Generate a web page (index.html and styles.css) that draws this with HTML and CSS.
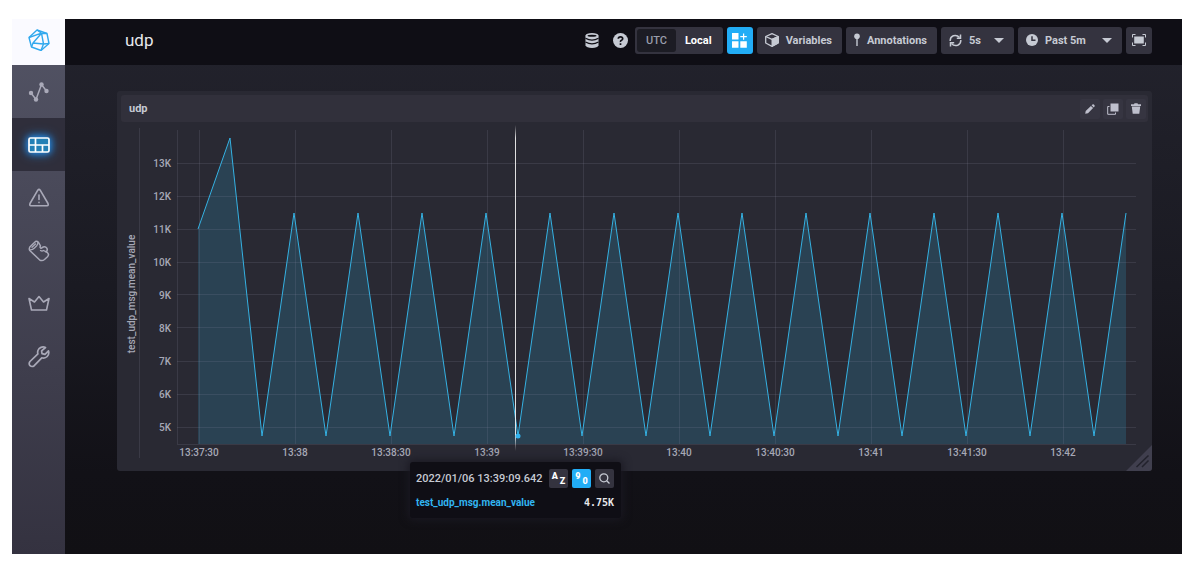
FILE: index.html
```html
<!DOCTYPE html>
<html lang="en">
<head>
    <meta charset="UTF-8">
    <meta name="viewport" content="width=device-width, initial-scale=1.0">
    <title>udp</title>
    <link rel="stylesheet" href="styles.css">
</head>
<body>
    <div class="app">
        <nav class="sidebar">
            <a class="logo" href="#" aria-label="Home">
                <svg width="22" height="22" viewBox="0 0 22 22" fill="none" stroke="#31a9ee" stroke-width="1.4" stroke-linejoin="round">
                    <path d="M9 1L19 4.500L21 14.500L13 21.500L3.500 18L1 8.500Z"/>
                    <path d="M9 1L13.500 4.200L19 4.500M13.500 4.200L1 8.500M13.500 4.200L15.500 15L5 14L13.500 4.200M5 14L3.500 18M15.500 15L21 14.500M15.500 15L13 21.500"/>
                </svg>
            </a>
            <a class="nav-item" href="#" aria-label="Data Explorer">
                <svg width="22" height="22" viewBox="0 0 22 22" fill="currentColor">
                    <path d="M3 12L8 18.500L13.500 3.500L18.500 10" fill="none" stroke="currentColor" stroke-width="1.5"/>
                    <circle cx="3" cy="12" r="2.200"/><circle cx="8" cy="18.500" r="2.200"/><circle cx="13.500" cy="3.500" r="2.200"/><circle cx="18.500" cy="10" r="2.200"/>
                </svg>
            </a>
            <a class="nav-item active" href="#" aria-label="Dashboards">
                <svg width="22" height="22" viewBox="0 0 22 22" fill="none" stroke="currentColor" stroke-width="1.7">
                    <rect x="1" y="4" width="20" height="14" rx="1.500" fill="#2380b5"/>
                    <path d="M1 11H21M7.500 4V18M14.500 11V18"/>
                </svg>
            </a>
            <a class="nav-item" href="#" aria-label="Alerts">
                <svg width="22" height="22" viewBox="0 0 22 22" fill="none" stroke="currentColor" stroke-width="1.6" stroke-linejoin="round" stroke-linecap="round">
                    <path d="M9.800 3.200Q11 1.500 12.200 3.200L20 16.500Q20.800 18.500 19 18.700H3Q1.200 18.500 2 16.500Z"/>
                    <path d="M11 8V12.500M11 15.200V15.600"/>
                </svg>
            </a>
            <a class="nav-item" href="#" aria-label="Load Data">
                <svg width="22" height="22" viewBox="0 0 22 22" fill="none" stroke="currentColor" stroke-width="1.5" stroke-linejoin="round" stroke-linecap="round">
                    <path d="M7.500 1.500L1.800 7Q0.800 9 1.800 10.500L11.500 19.800Q14 21.500 16.500 19.500L19.500 16.800Q21.500 14.500 19.500 12.700L18 11.800Q20 10.500 18.800 8.200Q17.500 6 15.200 7L13 8.300Q11.500 7.500 12.500 5.800L10.300 2.200Q9 0.800 7.500 1.500Z"/>
                    <path d="M2 9.800Q4.500 10 6.500 8L8.700 5.800Q10.300 4 9.800 2.200M4 7.200L7.500 4" stroke-width="1.3"/>
                    <path d="M12.500 10.500Q14 11.500 15.500 10.500L17.800 11.700" stroke-width="1.3"/>
                </svg>
            </a>
            <a class="nav-item" href="#" aria-label="Organization">
                <svg width="22" height="22" viewBox="0 0 22 22" fill="none" stroke="currentColor" stroke-width="1.6" stroke-linejoin="round">
                    <path d="M1 5.500L6.500 9L11 3.500L15.500 9L21 5.500L18.500 17H3.500Z"/>
                </svg>
            </a>
            <a class="nav-item" href="#" aria-label="Settings">
                <svg width="22" height="22" viewBox="0 0 22 22" fill="none" stroke="currentColor" stroke-width="1.7" stroke-linejoin="round">
                    <path d="M17.500 1.500Q14 0 11 2.700Q9 4.900 9.900 7.900L2 15.500Q0.400 17.700 2 19.700Q4 21.300 6.200 19.700L13.800 11.800Q17 12.700 19.200 10.500Q21.500 8.200 20.500 4.900L17 8.300L14 7.700L13.600 4.900Z"/>
                </svg>
            </a>
        </nav>

        <div class="page">
            <header class="topbar">
                <h1>udp</h1>
                <div class="controls">
                    <svg class="db-icon" width="14" height="15" viewBox="0 0 14 15" fill="currentColor">
                        <path d="M0.500 2.500V12.500Q1.500 14.900 7 14.900T13.500 12.500V2.500Z"/>
                        <ellipse cx="7" cy="2.700" rx="6.500" ry="2.600"/>
                        <ellipse cx="7" cy="2.700" rx="4.500" ry="1" fill="#0f0e15"/>
                        <path d="M0.500 5.200Q7 9 13.500 5.200M0.500 9Q7 12.800 13.500 9" fill="none" stroke="#0f0e15" stroke-width="1.2"/>
                    </svg>
                    <svg class="help-icon" width="15" height="15" viewBox="0 0 15 15">
                        <circle cx="7.500" cy="7.500" r="7.500" fill="currentColor"/>
                        <path d="M5.300 5.800Q5.400 3.800 7.500 3.800T9.700 5.700Q9.700 6.700 8.500 7.300T7.500 9M7.500 10.200V12" fill="none" stroke="#0f0e15" stroke-width="1.700"/>
                    </svg>
                    <div class="timezone">
                        <button type="button" aria-pressed="false">UTC</button>
                        <button type="button" class="selected" aria-pressed="true">Local</button>
                    </div>
                    <button type="button" class="btn square primary" aria-label="Add cell">
                        <svg width="15" height="15" viewBox="0 0 15 15" fill="currentColor">
                            <path d="M0 0H6.500V6.500H0ZM0 8.300H6.500V14.800H0ZM8.300 8.300H14.800V14.800H8.300ZM11 0.500H12.200V3H14.800V4.200H12.200V6.800H11V4.200H8.300V3H11Z"/>
                        </svg>
                    </button>
                    <button type="button" class="btn">
                        <svg width="14" height="14" viewBox="0 0 14 14" fill="none" stroke="currentColor" stroke-linejoin="round">
                            <path d="M7 0.700L13.300 3.500V10L7 13.300L0.700 10V3.500Z" stroke-width="1.300"/>
                            <path d="M0.700 3.500L7 6.300L13.300 3.500" stroke-width="1.300"/>
                            <path d="M7 6.300L13.300 3.500V10L7 13.300Z" fill="currentColor"/>
                        </svg>
                        Variables
                    </button>
                    <button type="button" class="btn">
                        <svg width="6" height="14" viewBox="0 0 6 14" fill="currentColor">
                            <circle cx="3" cy="3.300" r="2.800"/><path d="M2.300 5H3.700V13H2.300Z"/>
                        </svg>
                        Annotations
                    </button>
                    <div class="btn picker">
                        <svg width="13" height="13" viewBox="0 0 13 13" fill="none" stroke="currentColor" stroke-width="1.500">
                            <path d="M1.200 7Q1 3.200 4.300 1.800Q8 0.600 10.500 3.600M11.800 6Q12 9.800 8.700 11.200Q5 12.400 2.500 9.400"/>
                            <path d="M11.500 0.500V4.200H7.800M1.500 12.500V8.800H5.200"/>
                        </svg>
                        <select class="refresh-select" aria-label="Refresh interval">
                            <option>5s</option>
                            <option>10s</option>
                            <option>30s</option>
                        </select>
                        <span class="caret"></span>
                    </div>
                    <div class="btn picker">
                        <svg width="12" height="12" viewBox="0 0 12 12">
                            <circle cx="6" cy="6" r="6" fill="currentColor"/>
                            <path d="M6 2.200V6.200H9.500" fill="none" stroke="#34333f" stroke-width="1.500"/>
                        </svg>
                        <select class="range-select" aria-label="Time range">
                            <option>Past 5m</option>
                            <option>Past 15m</option>
                            <option>Past 1h</option>
                        </select>
                        <span class="caret"></span>
                    </div>
                    <button type="button" class="btn square" aria-label="Full screen">
                        <svg width="14" height="12" viewBox="0 0 14 12" fill="currentColor">
                            <path d="M2.200 2.500H11.800V9.500H2.200Z"/>
                            <path d="M0.500 3.500V0.500H3.500M10.500 0.500H13.500V3.500M13.500 8.500V11.500H10.500M3.500 11.500H0.500V8.500" fill="none" stroke="currentColor"/>
                        </svg>
                    </button>
                </div>
            </header>

            <main class="content">
                <section class="cell">
                    <div class="cell-header">
                        <h2>udp</h2>
                        <div class="cell-actions">
                            <button type="button" aria-label="Edit">
                                <svg width="10" height="10" viewBox="0 0 10 10" fill="currentColor"><path d="M0.200 9.800L0.700 7L5.900 1.900L8.100 4.100L3 9.300ZM6.600 1.200L7.500 0.400Q8.200 0 8.900 0.600L9.500 1.200Q10 1.900 9.500 2.600L8.800 3.400Z"/></svg>
                            </button>
                            <button type="button" aria-label="Clone">
                                <svg width="12" height="12" viewBox="0 0 12 12" fill="currentColor"><path d="M3.500 0.500H11.500V8.500H3.500Z"/><path d="M2.500 3.500H0.700V11.300H8.500V9.500" fill="none" stroke="currentColor"/></svg>
                            </button>
                            <button type="button" aria-label="Delete">
                                <svg width="10" height="11" viewBox="0 0 10 11" fill="currentColor"><path d="M0 1.200H3L3.500 0.200H6.500L7 1.200H10V3H0ZM0.800 3.500H9.200L8.300 10.800H1.700Z"/></svg>
                            </button>
                        </div>
                    </div>

                    <svg class="chart" viewBox="0 0 1035 349" role="img" aria-label="test_udp_msg.mean_value over time">
                        <defs>
                            <linearGradient id="cursorFade" x1="0" y1="0" x2="0" y2="1">
                                <stop offset="0" stop-color="#fff" stop-opacity="0"/>
                                <stop offset="0.04" stop-color="#fff"/>
                                <stop offset="0.95" stop-color="#fff"/>
                                <stop offset="1" stop-color="#fff" stop-opacity="0"/>
                            </linearGradient>
                        </defs>

                        <path class="area" d="M81 322V107L113 16L145 314L177 91L209 314L241 91L273 314L305 91L337 314L369 91L401 314L433 91L465 314L497 91L529 314L561 91L593 314L625 91L657 314L689 91L721 314L753 91L785 314L817 91L849 314L881 91L913 314L945 91L977 314L1009 91V322Z"/>
                        <path class="grid" d="M60 41.500H1019M60 74.500H1019M60 107.500H1019M60 140.500H1019M60 172.500H1019M60 205.500H1019M60 239.500H1019M60 272.500H1019M60 305.500H1019"/>
                        <path class="grid" d="M82.500 8V322M178.500 8V322M274.500 8V322M370.500 8V322M466.500 8V322M562.500 8V322M658.500 8V322M754.500 8V322M850.500 8V322M946.500 8V322"/>
                        <path class="axis" d="M22.500 6V336M60.500 8V322M60 322.500H1019"/>
                        <path class="line" d="M81 107L113 16L145 314L177 91L209 314L241 91L273 314L305 91L337 314L369 91L401 314L433 91L465 314L497 91L529 314L561 91L593 314L625 91L657 314L689 91L721 314L753 91L785 314L817 91L849 314L881 91L913 314L945 91L977 314L1009 91"/>
                        <rect x="398" y="3" width="1" height="326" fill="url(#cursorFade)" opacity="0.85"/>
                        <circle cx="401" cy="314" r="2.500" fill="#32b5f1"/>

                        <g class="tick y-tick">
                            <text x="54" y="45">13K</text>
                            <text x="54" y="78">12K</text>
                            <text x="54" y="111">11K</text>
                            <text x="54" y="144">10K</text>
                            <text x="54" y="177">9K</text>
                            <text x="54" y="210">8K</text>
                            <text x="54" y="243">7K</text>
                            <text x="54" y="276">6K</text>
                            <text x="54" y="309">5K</text>
                        </g>
                        <g class="tick x-tick">
                            <text x="82" y="334">13:37:30</text>
                            <text x="178" y="334">13:38</text>
                            <text x="274" y="334">13:38:30</text>
                            <text x="370" y="334">13:39</text>
                            <text x="466" y="334">13:39:30</text>
                            <text x="562" y="334">13:40</text>
                            <text x="658" y="334">13:40:30</text>
                            <text x="754" y="334">13:41</text>
                            <text x="850" y="334">13:41:30</text>
                            <text x="946" y="334">13:42</text>
                        </g>
                        <text class="tick x-tick" transform="translate(18 172) rotate(-90)">test_udp_msg.mean_value</text>
                    </svg>

                    <svg class="resizer" width="26" height="26" viewBox="0 0 26 26">
                        <path d="M26 0V23Q26 26 23 26H0Z" fill="#403f4e"/>
                        <path d="M10.500 22L22.500 10.500M16 22L22.500 15.500" stroke="#22222c" stroke-width="1.500"/>
                    </svg>

                    <div class="tooltip">
                        <div class="tooltip-row">
                            <span class="tooltip-time">2022/01/06 13:39:09.642</span>
                            <div class="tooltip-actions">
                                <button type="button" aria-label="Sort by name"><span>A</span><span class="low">Z</span></button>
                                <button type="button" class="primary" aria-label="Sort by value"><span>9</span><span class="low">0</span></button>
                                <button type="button" aria-label="Filter">
                                    <svg width="11" height="11" viewBox="0 0 11 11" fill="none" stroke="currentColor" stroke-width="1.300"><circle cx="4.800" cy="4.800" r="4"/><path d="M7.700 7.700L10.500 10.500"/></svg>
                                </button>
                            </div>
                        </div>
                        <div class="tooltip-row series">
                            <span>test_udp_msg.mean_value</span>
                            <span class="value">4.75K</span>
                        </div>
                    </div>
                </section>
            </main>
        </div>
    </div>
</body>
</html>
```
FILE: styles.css
```css
* {
    box-sizing: border-box;
}

body {
    margin: 0;
    padding: 19px 10px 21px 12px;
    background: #fff;
    font-family: Roboto, "Liberation Sans", sans-serif;
}

h1,
h2 {
    margin: 0;
}

button,
select {
    border: 0;
    padding: 0;
    font-family: inherit;
    color: inherit;
    cursor: pointer;
}

svg {
    display: block;
    flex-shrink: 0;
}

.app {
    display: flex;
    min-height: calc(100vh - 40px);
}

/* sidebar */
.sidebar {
    flex: 0 0 53px;
    background: linear-gradient(#535465, #343240);
}

.logo,
.nav-item {
    display: flex;
    align-items: center;
    justify-content: center;
    height: 53px;
    color: #a9a9b8;
}

.logo {
    height: 46px;
    padding-bottom: 4px;
    background: #fafaff;
}

.nav-item.active {
    background: #2f2e3b;
    color: #fff;
}

.nav-item.active svg {
    filter: drop-shadow(0 0 3px #2383d8) drop-shadow(0 0 5px #2383d8);
}

.page {
    flex: 1;
    min-width: 0;
    background: linear-gradient(#23232d, #1a1a22 50%, #121117 85%, #111014);
}

/* top bar */
.topbar {
    display: flex;
    align-items: center;
    justify-content: space-between;
    height: 46px;
    padding: 0 30px 4px 60px;
    background: #0f0e15;
}

.topbar h1 {
    font-size: 17px;
    font-weight: 400;
    color: #e7e8eb;
}

.controls {
    display: flex;
    align-items: center;
    gap: 4px;
    color: #c6cad3;
}

.db-icon {
    margin-right: 10px;
}

.help-icon {
    margin-right: 3px;
}

.btn,
.timezone {
    display: flex;
    align-items: center;
    height: 27px;
    border-radius: 3px;
    background: #34333f;
    font-size: 11px;
    font-weight: 700;
}

.btn {
    gap: 7px;
    padding: 0 10px 0 8px;
}

.btn.square {
    width: 26px;
    padding: 0;
    justify-content: center;
}

.btn.primary {
    background: #22adf6;
    color: #fff;
}

.timezone {
    padding: 2px;
}

.timezone button {
    height: 23px;
    padding: 0 9px;
    border-radius: 3px;
    background: #1c1c24;
    color: #999dab;
    font-size: 11px;
    font-weight: 500;
}

.timezone .selected {
    background: none;
    color: #fff;
    font-weight: 700;
}

.picker select {
    appearance: none;
    background: none;
    font-size: 11px;
    font-weight: 700;
}

.refresh-select {
    width: 18px;
}

.range-select {
    width: 50px;
}

.caret {
    border: 5px solid transparent;
    border-top-color: currentColor;
    border-bottom: 0;
}

/* dashboard cell */
.content {
    padding: 26px 30px 26px 52px;
}

.cell {
    position: relative;
    padding-top: 4px;
    border-radius: 3px;
    background: #292933;
}

.cell-header {
    display: flex;
    align-items: center;
    justify-content: space-between;
    height: 27px;
    margin: 0 4px;
    padding: 0 2px 0 8px;
    border-radius: 3px;
    background: #31303b;
}

.cell-header h2 {
    font-size: 11px;
    font-weight: 700;
    color: #c6cad3;
}

.cell-actions {
    display: flex;
    gap: 3px;
}

.cell-actions button {
    display: flex;
    align-items: center;
    justify-content: center;
    width: 20px;
    height: 20px;
    border-radius: 2px;
    background: #363541;
    color: #bebfcc;
}

.chart {
    width: 100%;
    height: auto;
}

.area {
    fill: #31c0f6;
    fill-opacity: 0.17;
}

.line {
    fill: none;
    stroke: #35b1e2;
    stroke-width: 1;
}

.grid,
.axis {
    fill: none;
    stroke: #8c8fa8;
    stroke-opacity: 0.17;
}

.tick {
    font-size: 10px;
    font-weight: 500;
    fill: #a6a8b6;
}

.y-tick {
    text-anchor: end;
}

.x-tick {
    text-anchor: middle;
}

.resizer {
    position: absolute;
    right: 0;
    bottom: 0;
}

/* hover legend */
.tooltip {
    position: absolute;
    top: 371px;
    left: 293px;
    width: 211px;
    padding: 7px 7px 6px 6px;
    border-radius: 3px;
    background: #0f0e15;
    box-shadow: 0 0 8px 2px #1a1922;
    color: #c6cad3;
}

.tooltip-row {
    display: flex;
    align-items: center;
    justify-content: space-between;
    height: 19px;
}

.tooltip-time {
    font-size: 11px;
    font-weight: 500;
}

.tooltip-actions {
    display: flex;
    gap: 4px;
}

.tooltip-actions button {
    display: flex;
    align-items: center;
    justify-content: center;
    width: 19px;
    height: 19px;
    border-radius: 2px;
    background: #34333f;
    font-size: 9px;
    font-weight: 900;
    line-height: 9px;
}

.tooltip-actions button span {
    padding-bottom: 5px;
    color: #fff;
}

.tooltip-actions button .low {
    padding: 5px 0 0 2px;
}

.tooltip-actions .primary {
    background: #22adf6;
}

.series {
    margin-top: 5px;
    font-size: 10px;
    font-weight: 700;
    color: #32b5f1;
}

.value {
    font-family: "DejaVu Sans Mono", monospace;
    color: #e7e8eb;
}
```
